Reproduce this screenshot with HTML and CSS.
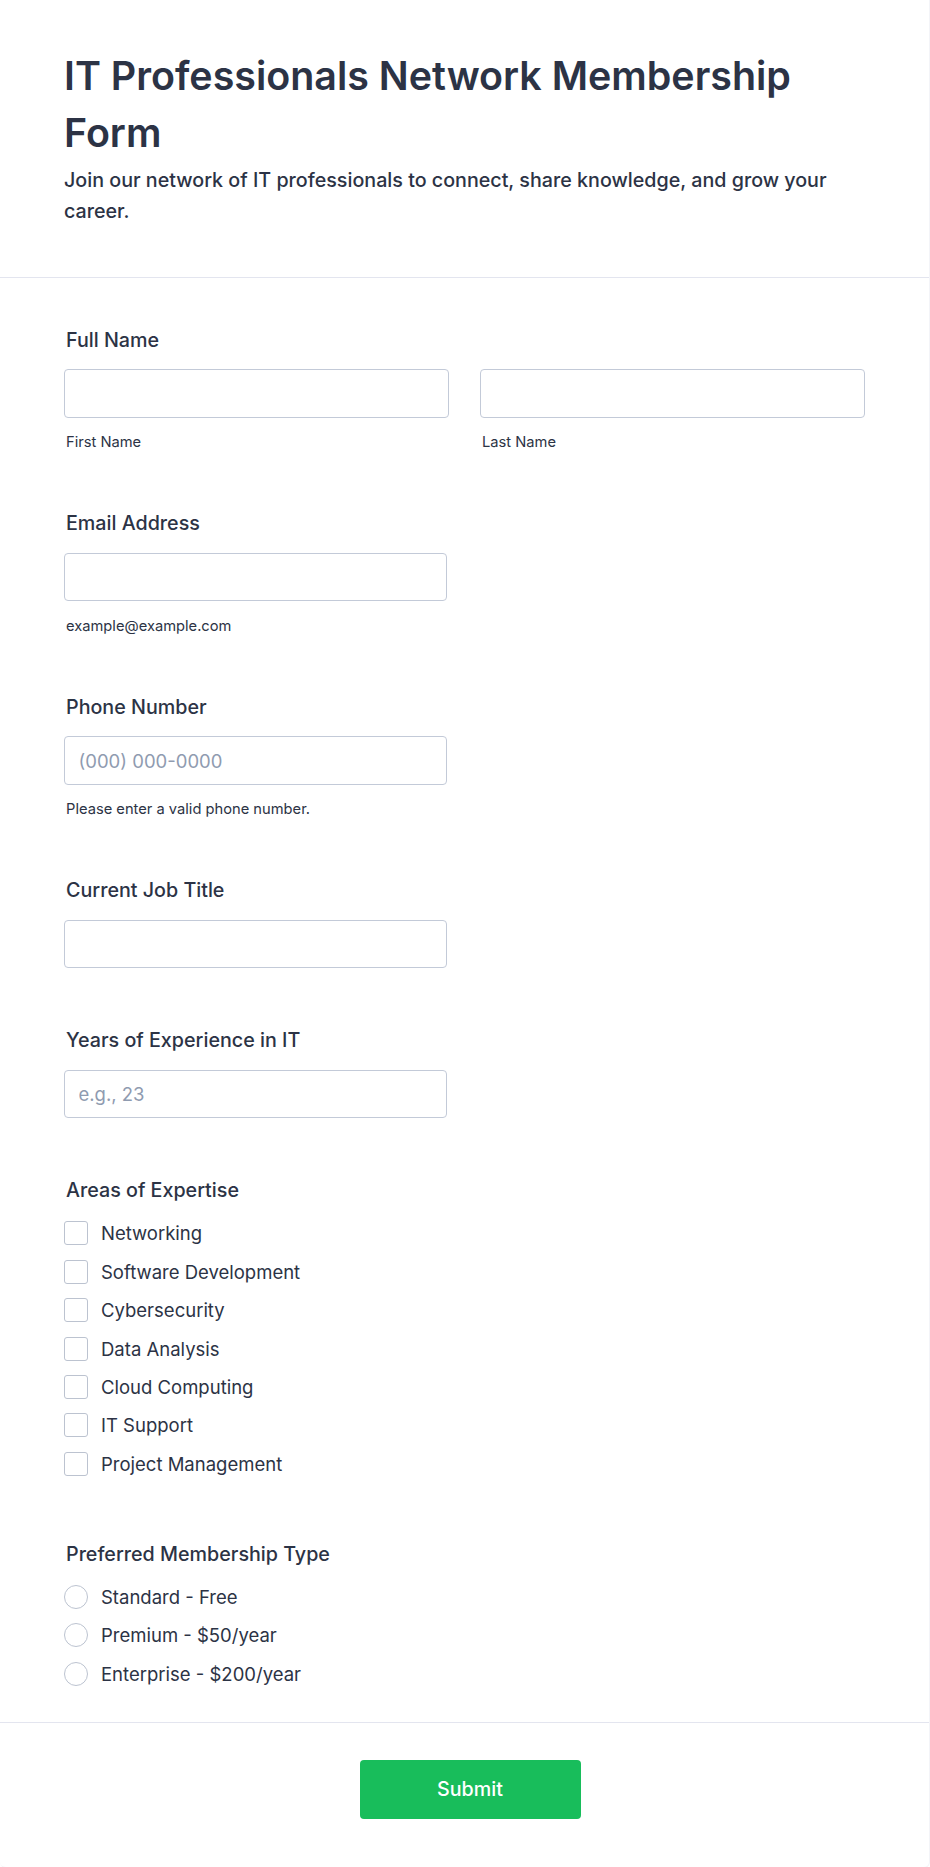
FILE: index.html
```html
<!DOCTYPE html>
<html lang="en">
<head>
<meta charset="utf-8">
<title>IT Professionals Network Membership Form</title>
<link rel="stylesheet" href="styles.css">
</head>
<body>
<div class="card">
  <header class="header">
    <h1 class="title">IT Professionals Network Membership Form</h1>
    <p class="subtitle">Join our network of IT professionals to connect, share knowledge, and grow your career.</p>
  </header>

  <form class="form">
    <div class="field">
      <label class="label">Full Name</label>
      <div class="two-col">
        <div class="col">
          <input class="input" type="text">
          <span class="sublabel">First Name</span>
        </div>
        <div class="col">
          <input class="input" type="text">
          <span class="sublabel">Last Name</span>
        </div>
      </div>
    </div>

    <div class="field">
      <label class="label">Email Address</label>
      <input class="input half" type="email">
      <span class="sublabel">example@example.com</span>
    </div>

    <div class="field">
      <label class="label">Phone Number</label>
      <input class="input half" type="tel" placeholder="(000) 000-0000">
      <span class="sublabel">Please enter a valid phone number.</span>
    </div>

    <div class="field">
      <label class="label">Current Job Title</label>
      <input class="input half" type="text">
    </div>

    <div class="field">
      <label class="label">Years of Experience in IT</label>
      <input class="input half" type="text" placeholder="e.g., 23">
    </div>

    <div class="field">
      <label class="label">Areas of Expertise</label>
      <div class="options spaced">
        <label class="option"><span class="box"></span><span>Networking</span></label>
        <label class="option"><span class="box"></span><span>Software Development</span></label>
        <label class="option"><span class="box"></span><span>Cybersecurity</span></label>
        <label class="option"><span class="box"></span><span>Data Analysis</span></label>
        <label class="option"><span class="box"></span><span>Cloud Computing</span></label>
        <label class="option"><span class="box"></span><span>IT Support</span></label>
        <label class="option"><span class="box"></span><span>Project Management</span></label>
      </div>
    </div>

    <div class="field">
      <label class="label">Preferred Membership Type</label>
      <div class="options radios">
        <label class="option"><span class="box round"></span><span>Standard - Free</span></label>
        <label class="option"><span class="box round"></span><span>Premium - $50/year</span></label>
        <label class="option"><span class="box round"></span><span>Enterprise - $200/year</span></label>
      </div>
    </div>
  </form>

  <footer class="footer">
    <button class="submit" type="button">Submit</button>
  </footer>
</div>
</body>
</html>
```

FILE: styles.css
```css
* {
  box-sizing: border-box;
}

html, body {
  margin: 0;
  padding: 0;
  background: #ffffff;
}

body {
  font-family: Inter, "Noto Sans", "Liberation Sans", sans-serif;
  color: #2c3345;
}

.card {
  width: 930px;
  min-height: 1867px;
  background: #ffffff;
  border-right: 1px solid #f3f4f8;
  border-bottom: 1px solid #f5f6f9;
  border-radius: 0 0 6px 6px;
}

.header {
  padding: 48px 64px 50.6px;
  border-bottom: 1px solid #e3e5ef;
}

.title {
  margin: 0 0 3.2px;
  font-size: 39.4px;
  line-height: 57px;
  font-weight: 600;
  letter-spacing: 0;
}

.subtitle {
  margin: 0;
  font-size: 19.7px;
  line-height: 30.4px;
  font-weight: 500;
}

.form {
  display: flex;
  flex-direction: column;
  gap: 60px;
  padding: 50.4px 64px 36.5px;
  border-bottom: 1px solid #e3e5ef;
}

.field {
  display: flex;
  flex-direction: column;
  align-items: flex-start;
}

.label {
  display: block;
  padding-left: 2px;
  font-size: 19.7px;
  line-height: 24px;
  font-weight: 500;
  margin-bottom: 17.5px;
}

.two-col {
  display: grid;
  grid-template-columns: 385px 385px;
  column-gap: 31px;
  width: 100%;
}

.col {
  display: flex;
  flex-direction: column;
}

.input {
  display: block;
  width: 100%;
  height: 48.5px;
  border: 1px solid #c3cad8;
  border-radius: 4px;
  background: #ffffff;
  padding: 0 13.5px;
  font-family: inherit;
  font-size: 18.5px;
  color: #2c3345;
  outline: none;
}

.input.half {
  width: 383px;
}

.input::placeholder {
  color: #8f9bb0;
}

.sublabel {
  display: block;
  margin-top: 15.5px;
  padding-left: 2px;
  font-size: 14.7px;
  line-height: 18px;
  font-weight: 400;
  color: #2c3345;
}

.options {
  display: flex;
  flex-direction: column;
  gap: 14.4px;
}

.options.spaced {
  margin-top: 1.5px;
  margin-bottom: 6.4px;
}

.options.radios {
  margin-top: 1.2px;
}

.option {
  display: flex;
  align-items: center;
  gap: 13px;
  height: 24px;
  font-size: 18.5px;
  line-height: 24px;
  font-weight: 400;
}

.box {
  flex: none;
  width: 24px;
  height: 24px;
  border: 1px solid #bcc3d0;
  border-radius: 3px;
  background: #ffffff;
}

.box.round {
  border-radius: 50%;
}

.footer {
  display: flex;
  justify-content: center;
  padding: 36.5px 0 48px 11px;
}

.submit {
  width: 221px;
  height: 59.5px;
  border: none;
  border-radius: 4px;
  background: #18bd5b;
  color: #ffffff;
  font-family: inherit;
  font-size: 19.7px;
  font-weight: 500;
  cursor: pointer;
}
```
